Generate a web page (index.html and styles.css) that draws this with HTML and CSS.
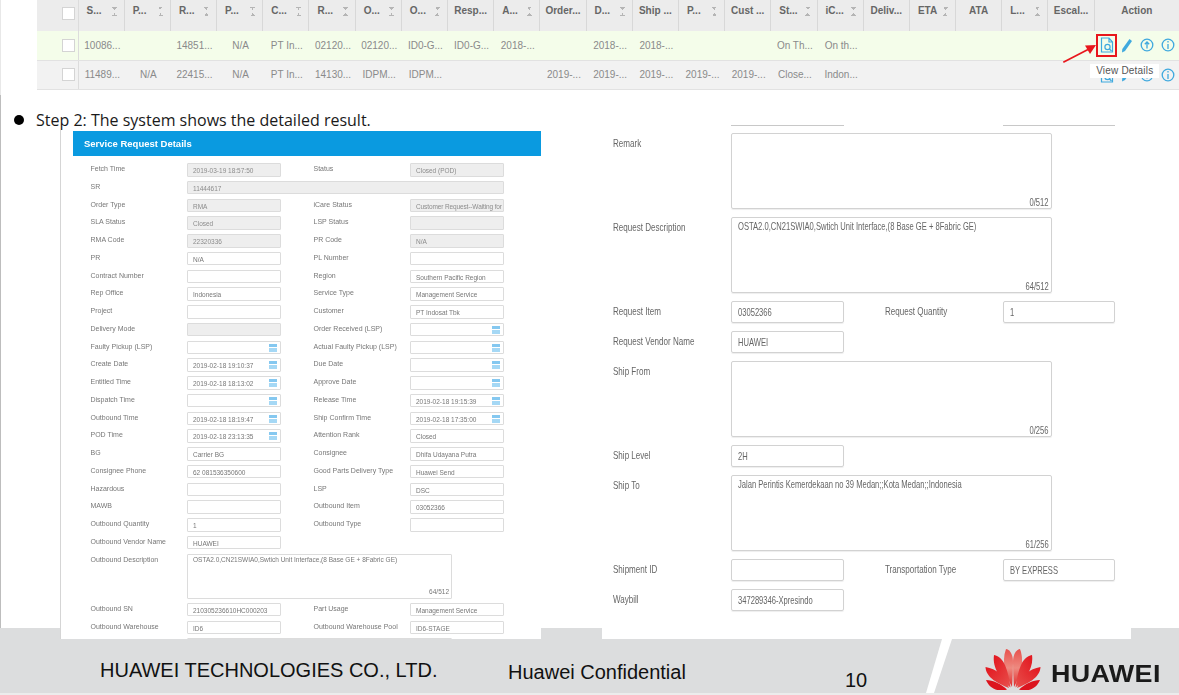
FILE: index.html
```html
<!DOCTYPE html>
<html lang="en">
<head>
    <meta charset="UTF-8">
    <meta name="viewport" content="width=device-width, initial-scale=1.0">
    <title>Service Request Details</title>
    <link rel="stylesheet" href="styles.css">
</head>
<body>
    <div class="slide">
        <svg class="icon-defs" width="0" height="0">
            <defs>
                <g id="ic-view" fill="none" stroke="#3fa9de" stroke-width="1.200"><path d="M9 1H1.500V15H12.500V5zM9 1V5H12.500"/><circle cx="7.500" cy="10" r="2.600"/><path d="M9.500 12L11.500 14"/></g>
                <path id="ic-edit" d="M8.500 1L11 3L4 13L1 14.500L1.300 11z" fill="#3fa9de"/>
                <g id="ic-up" fill="none" stroke="#3fa9de" stroke-width="1.300"><circle cx="7" cy="7" r="5.800"/><path d="M7 10.500V4M4.800 6.200L7 4L9.200 6.200"/></g>
                <g id="ic-info" fill="none" stroke="#3fa9de" stroke-width="1.300"><circle cx="7" cy="7" r="5.800"/><path d="M7 6V11M7 3V4.600"/></g>
            </defs>
        </svg>

        <table class="orders">
            <colgroup>
                <col class="col-check">
                <col span="22" class="col-data">
                <col class="col-action">
            </colgroup>
            <thead>
                <tr>
                    <th><span class="check"></span></th>
                    <th class="sort"><div>S...<i></i></div></th>
                    <th class="sort"><div>P...<i></i></div></th>
                    <th class="sort"><div>R...<i></i></div></th>
                    <th class="sort"><div>P...<i></i></div></th>
                    <th class="sort"><div>C...<i></i></div></th>
                    <th class="sort"><div>R...<i></i></div></th>
                    <th class="sort"><div>O...<i></i></div></th>
                    <th class="sort"><div>O...<i></i></div></th>
                    <th>Resp...</th>
                    <th class="sort"><div>A...<i></i></div></th>
                    <th>Order...</th>
                    <th class="sort"><div>D...<i></i></div></th>
                    <th>Ship ...</th>
                    <th class="sort"><div>P...<i></i></div></th>
                    <th>Cust ...</th>
                    <th class="sort"><div>St...<i></i></div></th>
                    <th class="sort"><div>iC...<i></i></div></th>
                    <th>Deliv...</th>
                    <th class="sort"><div>ETA<i></i></div></th>
                    <th>ATA</th>
                    <th class="sort"><div>L...<i></i></div></th>
                    <th>Escal...</th>
                    <th>Action</th>
                </tr>
            </thead>
            <tbody>
                <tr class="row-active">
                    <td><span class="check"></span></td>
                    <td>10086...</td><td></td><td>14851...</td><td>N/A</td><td>PT In...</td>
                    <td>02120...</td><td>02120...</td><td>ID0-G...</td><td>ID0-G...</td><td>2018-...</td>
                    <td></td><td>2018-...</td><td>2018-...</td><td></td><td></td>
                    <td>On Th...</td><td>On th...</td><td></td><td></td><td></td><td></td><td></td>
                    <td class="actions">
                        <div class="action-list">
                            <span class="action-view picked"><svg width="14" height="16"><use href="#ic-view"/></svg></span>
                            <svg width="12" height="15"><use href="#ic-edit"/></svg>
                            <svg width="14" height="14"><use href="#ic-up"/></svg>
                            <svg width="14" height="14"><use href="#ic-info"/></svg>
                        </div>
                    </td>
                </tr>
                <tr class="row-plain">
                    <td><span class="check"></span></td>
                    <td>11489...</td><td>N/A</td><td>22415...</td><td>N/A</td><td>PT In...</td>
                    <td>14130...</td><td>IDPM...</td><td>IDPM...</td><td></td><td></td>
                    <td>2019-...</td><td>2019-...</td><td>2019-...</td><td>2019-...</td><td>2019-...</td>
                    <td>Close...</td><td>Indon...</td><td></td><td></td><td></td><td></td><td></td>
                    <td class="actions">
                        <div class="action-list">
                            <span class="action-view"><svg width="14" height="16"><use href="#ic-view"/></svg></span>
                            <svg width="12" height="15"><use href="#ic-edit"/></svg>
                            <svg width="14" height="14"><use href="#ic-up"/></svg>
                            <svg width="14" height="14"><use href="#ic-info"/></svg>
                        </div>
                        <span class="tooltip">View Details</span>
                    </td>
                </tr>
            </tbody>
        </table>

        <!-- red callout arrow pointing at the view icon -->
        <svg class="callout" width="40" height="30" viewBox="0 0 40 30">
            <path d="M1.300 22.300L26 9.500" stroke="#e8171c" stroke-width="1.800"/>
            <path d="M34 5L23 5.500L28 14z" fill="#e8171c"/>
        </svg>

        <p class="step">Step 2: The system shows the detailed result.</p>

        <div class="panels">
            <section class="details">
                <h2>Service Request Details</h2>
                <div class="details-form">
                    <label>Fetch Time</label><div class="field off">2019-03-19 18:57:50</div><label class="second">Status</label><div class="field off">Closed (POD)</div>
                    <label>SR</label><div class="field off wide">11444617</div>
                    <label>Order Type</label><div class="field off">RMA</div><label class="second">iCare Status</label><div class="field off tight">Customer Request--Waiting for</div>
                    <label>SLA Status</label><div class="field off">Closed</div><label class="second">LSP Status</label><div class="field off"></div>
                    <label>RMA Code</label><div class="field off">22320336</div><label class="second">PR Code</label><div class="field off">N/A</div>
                    <label>PR</label><div class="field">N/A</div><label class="second">PL Number</label><div class="field"></div>
                    <label>Contract Number</label><div class="field"></div><label class="second">Region</label><div class="field">Southern Pacific Region</div>
                    <label>Rep Office</label><div class="field">Indonesia</div><label class="second">Service Type</label><div class="field">Management Service</div>
                    <label>Project</label><div class="field"></div><label class="second">Customer</label><div class="field">PT Indosat Tbk</div>
                    <label>Delivery Mode</label><div class="field off"></div><label class="second">Order Received (LSP)</label><div class="field date"></div>
                    <label>Faulty Pickup (LSP)</label><div class="field date"></div><label class="second">Actual Faulty Pickup (LSP)</label><div class="field date"></div>
                    <label>Create Date</label><div class="field date">2019-02-18 19:10:37</div><label class="second">Due Date</label><div class="field date"></div>
                    <label>Entitled Time</label><div class="field date">2019-02-18 18:13:02</div><label class="second">Approve Date</label><div class="field date"></div>
                    <label>Dispatch Time</label><div class="field date"></div><label class="second">Release Time</label><div class="field date">2019-02-18 19:15:39</div>
                    <label>Outbound Time</label><div class="field date">2019-02-18 18:19:47</div><label class="second">Ship Confirm Time</label><div class="field date">2019-02-18 17:35:00</div>
                    <label>POD Time</label><div class="field date">2019-02-18 23:13:35</div><label class="second">Attention Rank</label><div class="field">Closed</div>
                    <label>BG</label><div class="field">Carrier BG</div><label class="second">Consignee</label><div class="field">Dhifa Udayana Putra</div>
                    <label>Consignee Phone</label><div class="field">62 081536350600</div><label class="second">Good Parts Delivery Type</label><div class="field">Huawei Send</div>
                    <label>Hazardous</label><div class="field"></div><label class="second">LSP</label><div class="field">DSC</div>
                    <label>MAWB</label><div class="field"></div><label class="second">Outbound Item</label><div class="field">03052366</div>
                    <label>Outbound Quantity</label><div class="field">1</div><label class="second">Outbound Type</label><div class="field"></div>
                    <label>Outbound Vendor Name</label><div class="field">HUAWEI</div>
                    <label>Outbound Description</label><div class="field area">OSTA2.0,CN21SWIA0,Swtich Unit Interface,(8 Base GE + 8Fabric GE)<span class="count">64/512</span></div>
                    <label>Outbound SN</label><div class="field">210305236610HC000203</div><label class="second">Part Usage</label><div class="field">Management Service</div>
                    <label>Outbound Warehouse</label><div class="field">ID6</div><label class="second">Outbound Warehouse Pool</label><div class="field">ID6-STAGE</div>
                    <label></label><div class="field area"></div>
                </div>
            </section>

            <section class="shipping">
                <div class="rule rule-a"></div><div class="rule rule-b"></div>
                <label>Remark</label><div class="box area"><span class="count">0/512</span></div>
                <label>Request Description</label><div class="box area"><span class="squeeze">OSTA2.0,CN21SWIA0,Swtich Unit Interface,(8 Base GE + 8Fabric GE)</span><span class="count">64/512</span></div>
                <label>Request Item</label><div class="box"><span class="squeeze">03052366</span></div><label class="second">Request Quantity</label><div class="box"><span class="squeeze">1</span></div>
                <label>Request Vendor Name</label><div class="box"><span class="squeeze">HUAWEI</span></div>
                <label>Ship From</label><div class="box area"><span class="count">0/256</span></div>
                <label>Ship Level</label><div class="box"><span class="squeeze">2H</span></div>
                <label>Ship To</label><div class="box area"><span class="squeeze">Jalan Perintis Kemerdekaan no 39 Medan;;Kota Medan;;Indonesia</span><span class="count">61/256</span></div>
                <label>Shipment ID</label><div class="box"></div><label class="second">Transportation Type</label><div class="box"><span class="squeeze">BY EXPRESS</span></div>
                <label>Waybill</label><div class="box"><span class="squeeze">347289346-Xpresindo</span></div>
            </section>
        </div>

        <footer class="footer">
            <svg class="slash" width="30" height="56" viewBox="0 0 30 56"><path d="M17 0H27L9 54H1z" fill="#fff"/></svg>
            <span class="company">HUAWEI TECHNOLOGIES CO., LTD.</span>
            <span class="secret">Huawei Confidential</span>
            <span class="page-no">10</span>
            <div class="logo">
                <svg width="56" height="42" viewBox="-28 -40 56 42">
                    <defs>
                        <linearGradient id="petal-top" x1="0" y1="0" x2="0" y2="1">
                            <stop offset="0" stop-color="#e8504c"/>
                            <stop offset=".5" stop-color="#ee8a80"/>
                            <stop offset="1" stop-color="#e02a2c"/>
                        </linearGradient>
                        <linearGradient id="petal-side" x1="0" y1="0" x2="1" y2="1">
                            <stop offset="0" stop-color="#e2161f"/>
                            <stop offset="1" stop-color="#e8504c"/>
                        </linearGradient>
                        <path id="p1" d="M-1 -1C-7 -12 -12 -26 -7 -39C-2 -38 0 -32 0 -26C0 -18 -.5 -8 -1 -1z" fill="url(#petal-top)"/>
                        <path id="p2" d="M-2.500 -.5C-12 -8 -21 -20 -19 -33C-14 -32 -10 -28 -8 -23C-5 -16 -3.500 -8 -2.500 -.5z" fill="url(#petal-side)"/>
                        <path id="p3" d="M-4 0C-14 -4 -27 -10 -27.500 -21C-22 -20 -17 -18 -14 -15C-9 -11 -6 -6 -4 0z" fill="url(#petal-side)"/>
                        <path id="p4" d="M-6 1.500C-13 4 -23 2 -27 -8C-20 -8 -12 -4 -6 1.500z" fill="#dc141e"/>
                    </defs>
                    <use href="#p1"/><use href="#p2"/><use href="#p3"/><use href="#p4"/>
                    <use href="#p1" transform="scale(-1 1)"/><use href="#p2" transform="scale(-1 1)"/><use href="#p3" transform="scale(-1 1)"/><use href="#p4" transform="scale(-1 1)"/>
                </svg>
                <span class="wordmark">HUAWEI</span>
            </div>
        </footer>
    </div>
</body>
</html>
```

FILE: styles.css
```css
html, body {
    margin: 0;
    padding: 0;
    background: #ffffff;
}
.slide {
    position: relative;
    width: 1179px;
    height: 695px;
    overflow: hidden;
    font-family: "Liberation Sans", Arial, sans-serif;
}
.slide::before {
    content: "";
    position: absolute;
    left: 0;
    top: 0;
    width: 1px;
    height: 628px;
    background: linear-gradient(#e8e8e8 0 95px, #bdbdbd 95px);
}
.icon-defs { position: absolute; }

/* order table */
.orders {
    margin-left: 37px;
    width: 1142px;
    height: 89px;
    table-layout: fixed;
    border-collapse: collapse;
    font-size: 10px;
    color: #8a8a8a;
}
.col-check { width: 41px; }
.col-data { width: 46.2px; }
.orders th {
    height: 31px;
    padding: 5px 0 0;
    vertical-align: top;
    background: #ececec;
    border-right: 1px solid #d8d8d8;
    color: #666666;
    font-weight: bold;
    white-space: nowrap;
    text-align: center;
    box-sizing: border-box;
}
.orders th:last-child { border-right: 0; }
.orders th.sort div {
    display: flex;
    justify-content: space-between;
    padding: 0 7px 0 8px;
}
.orders th i {
    width: 5px;
    height: 9px;
    margin-top: 2px;
    background:
        linear-gradient(45deg, transparent 50%, #b5b5b5 50%) 0 0 / 3px 3px no-repeat,
        linear-gradient(-45deg, transparent 50%, #b5b5b5 50%) 2px 0 / 3px 3px no-repeat,
        linear-gradient(135deg, transparent 50%, #b5b5b5 50%) 0 6px / 3px 3px no-repeat,
        linear-gradient(-135deg, transparent 50%, #b5b5b5 50%) 2px 6px / 3px 3px no-repeat;
}
.orders td {
    height: 29px;
    padding: 0 0 0 2px;
    text-align: center;
    white-space: nowrap;
    overflow: hidden;
    border-bottom: 1px solid #e2e2e2;
    box-sizing: border-box;
}
.orders td:first-child { padding: 0; }
.orders td:first-child,
.orders th:first-child { border-right: 1px solid #dcdcdc; }
.row-active td { background: #f4fdea; }
.row-plain td { background: #f2f2f2; }
.check {
    display: block;
    width: 11px;
    height: 11px;
    margin: 0 0 0 25px;
    background: #ffffff;
    border: 1px solid #d4d4d4;
}
.orders th .check { margin-top: 2px; }
.orders td.actions {
    position: relative;
    overflow: visible;
    padding: 0;
}
.action-list {
    display: flex;
    align-items: center;
    height: 23px;
    padding-left: 2px;
    gap: 7px;
}
.action-view {
    box-sizing: border-box;
    flex: none;
    width: 21px;
    height: 23px;
    margin-right: -3px;
    display: flex;
    align-items: center;
    justify-content: center;
    border: 2px solid transparent;
}
.action-view.picked { border-color: #e8171c; }
.tooltip {
    position: absolute;
    left: -4px;
    top: 3px;
    padding: 1px 6px 2px;
    background: #ffffff;
    color: #555555;
    font-size: 10px;
    line-height: 11px;
    letter-spacing: .2px;
}
.callout {
    position: absolute;
    left: 1062px;
    top: 40px;
}

.step {
    margin: 0;
    height: 40px;
    box-sizing: border-box;
    padding: 21px 0 0 36px;
    font-family: "Open Sans", sans-serif;
    font-size: 16px;
    line-height: 18px;
    color: #1a1a1a;
    position: relative;
}
.step::before {
    content: "";
    position: absolute;
    left: 14px;
    top: 25px;
    width: 10px;
    height: 10px;
    border-radius: 50%;
    background: #000000;
}

/* the two pasted forms */
.panels {
    display: flex;
    align-items: flex-start;
    padding-left: 60px;
    gap: 61px;
    height: 509px;
    position: relative;
    z-index: 1;
}
.details {
    width: 481px;
    height: 509px;
    box-sizing: border-box;
    border-left: 1px solid #d5d5d5;
    background: #ffffff;
    padding: 1px 0 0 12px;
    overflow: hidden;
    color: #777777;
    filter: blur(.4px);
}
.details h2 {
    margin: 0;
    height: 25px;
    padding-left: 11px;
    background: #0a9ae0;
    color: #ffffff;
    font-size: 9.500px;
    line-height: 25px;
}
.details-form {
    display: grid;
    grid-template-columns: 96.500px 94px 32.500px 96.500px 93.500px;
    grid-auto-rows: min-content;
    row-gap: 4.250px;
    padding: 7.500px 0 0 17.500px;
    font-size: 7px;
    line-height: 12px;
}
.details-form label { grid-column: 1; white-space: nowrap; }
.details-form label.second { grid-column: 4; }
.field {
    position: relative;
    box-sizing: border-box;
    height: 13.500px;
    border: 1px solid #dcdcdc;
    border-radius: 1px;
    padding-left: 5px;
    font-size: 6.500px;
    line-height: 13px;
    white-space: nowrap;
    overflow: hidden;
}
.field.off { background: #eeeeee; color: #8c8c8c; }
.field.tight { letter-spacing: -.12px; }
.field.wide { grid-column: 2 / 6; }
.field.area {
    grid-column: 2 / 6;
    width: 265px;
    height: 45px;
    line-height: 10px;
}
.field.date::after {
    content: "";
    position: absolute;
    right: 3px;
    top: 2px;
    width: 8px;
    height: 8px;
    background: linear-gradient(#85c8f0 0 38%, #ffffff 38% 50%, #a5d8f5 50%);
}
.count {
    position: absolute;
    right: 2px;
    bottom: 1px;
    font-size: 6.500px;
    line-height: 10px;
}

.shipping {
    width: 529px;
    height: 514px;
    margin-top: -5px;
    box-sizing: border-box;
    background: #ffffff;
    display: grid;
    grid-template-columns: 118px 113px 41px 118px 112px;
    grid-auto-rows: min-content;
    row-gap: 7px;
    padding-left: 11px;
    color: #666666;
    font-size: 10px;
    filter: blur(.25px);
}
.shipping label {
    grid-column: 1;
    padding-top: 3px;
    white-space: nowrap;
    font-size: 11.500px;
    line-height: 14px;
    transform: scaleX(.7);
    transform-origin: left;
}
.shipping label.second { grid-column: 4; }
.rule {
    height: 1px;
    background: #c8c8c8;
}
.rule-a { grid-column: 2; }
.rule-b { grid-column: 5; }
.box {
    position: relative;
    box-sizing: border-box;
    height: 22px;
    margin-bottom: 1px;
    padding: 0 0 0 6px;
    border: 1px solid #d2d2d2;
    border-radius: 2px;
    box-shadow: 0 1px 1px #eeeeee;
    line-height: 20px;
    white-space: nowrap;
}
.box.area {
    grid-column: 2 / 6;
    width: 321px;
    height: 76px;
}
.squeeze {
    display: inline-block;
    font-size: 11px;
    transform: scaleX(.69);
    transform-origin: left;
}
.box.area .squeeze { line-height: 16px; display: block; }
.shipping .count {
    font-size: 11px;
    right: 2px;
    bottom: -1px;
    line-height: 14px;
    transform: scaleX(.69);
    transform-origin: right;
}

/* footer band, the panels lie over its top edge */
.footer {
    position: relative;
    height: 67px;
    box-sizing: border-box;
    margin-top: -11px;
    background: #dcddde;
    border-bottom: 2px solid #ececec;
    color: #111111;
}
.slash {
    position: absolute;
    left: 925px;
    top: 11px;
}
.company,
.secret,
.page-no {
    position: absolute;
    font-size: 20px;
    line-height: 24px;
    white-space: nowrap;
}
.company { left: 100px; top: 30px; }
.secret { left: 508px; top: 32px; }
.page-no { left: 845px; top: 40px; }
.logo {
    position: absolute;
    left: 985px;
    top: 20px;
    display: flex;
    align-items: flex-start;
    gap: 10px;
}
.wordmark {
    font-size: 23px;
    font-weight: bold;
    line-height: 28px;
    margin-top: 12px;
    color: #1a1a1a;
    letter-spacing: .3px;
    transform: scaleX(1.17);
    transform-origin: left;
}
```
